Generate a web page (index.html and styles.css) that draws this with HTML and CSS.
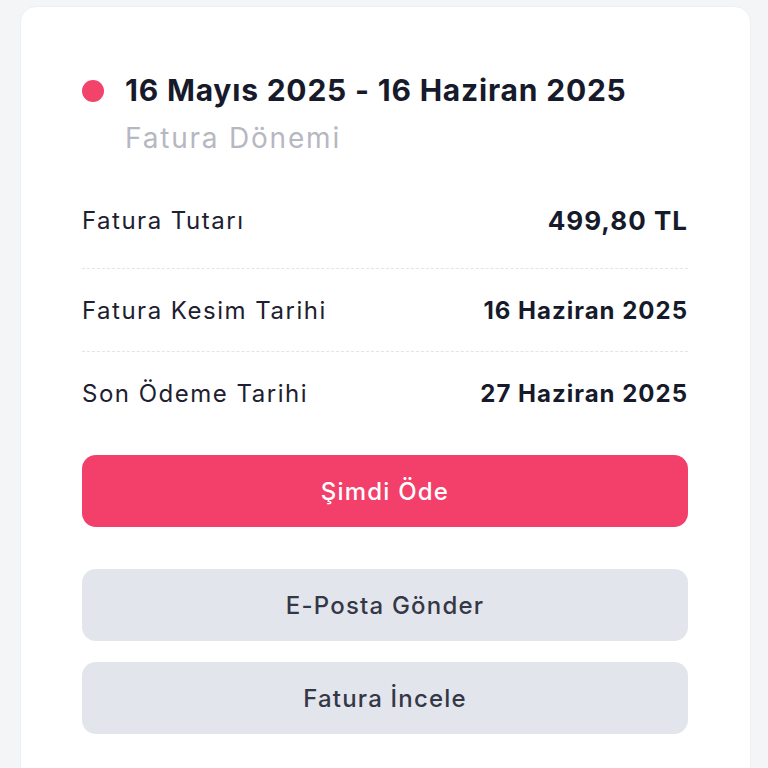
FILE: index.html
```html
<!DOCTYPE html>
<html lang="tr">
<head>
  <meta charset="UTF-8" />
  <meta name="viewport" content="width=device-width, initial-scale=1.0" />
  <title>Fatura Detayı</title>
  <link rel="stylesheet" href="styles.css">
</head>
<body>
  <div class="card">
    <div class="period">
      <span class="dot"></span>
      <div>
        <h2 class="period-title">16 Mayıs 2025 - 16 Haziran 2025</h2>
        <p class="period-label">Fatura Dönemi</p>
      </div>
    </div>

    <div class="info">
      <div class="info-row">
        <span class="info-label">Fatura Tutarı</span>
        <span class="info-value amount">499,80 TL</span>
      </div>
      <div class="info-row">
        <span class="info-label">Fatura Kesim Tarihi</span>
        <span class="info-value">16 Haziran 2025</span>
      </div>
      <div class="info-row">
        <span class="info-label">Son Ödeme Tarihi</span>
        <span class="info-value">27 Haziran 2025</span>
      </div>
    </div>

    <button class="btn btn-pay">Şimdi Öde</button>
    <div class="secondary">
      <button class="btn btn-light">E-Posta Gönder</button>
      <button class="btn btn-light">Fatura İncele</button>
    </div>
  </div>
</body>
</html>
```

FILE: styles.css
```css
body {
  font-family: Inter, 'Noto Sans', Arial, sans-serif;
  margin: 0;
  padding: 0;
  background-color: #f4f5f7;
  overflow: hidden;
}
.card {
  background-color: white;
  margin: 6px 17px 0 20px;
  border: 1px solid #eef0f3;
  border-radius: 16px;
  padding: 65px 62px 40px 61px;
  min-height: 800px;
  box-sizing: border-box;
}
.period {
  display: flex;
  align-items: flex-start;
  gap: 21px;
}
.dot {
  width: 22px;
  height: 22px;
  border-radius: 50%;
  background-color: #f2436b;
  flex-shrink: 0;
  margin-top: 8px;
}
.period-title {
  margin: 0;
  font-size: 30px;
  line-height: 36px;
  font-weight: 700;
  letter-spacing: 0.8px;
  color: #161a2b;
}
.period-label {
  margin: 15px 0 0;
  font-size: 28px;
  line-height: 30px;
  letter-spacing: 1.8px;
  color: #b6b8c1;
}
.info {
  margin-top: 27px;
}
.info-row {
  display: flex;
  justify-content: space-between;
  align-items: center;
  height: 83px;
  border-bottom: 1px dashed #e2e4e8;
  box-sizing: border-box;
}
.info-row:first-child {
  height: 89px;
  padding-bottom: 7px;
}
.info-row:last-child {
  height: 82px;
  border-bottom: none;
}
.info-label {
  font-size: 24px;
  letter-spacing: 1.5px;
  color: #1d2030;
}
.info-value {
  font-size: 24px;
  font-weight: 700;
  letter-spacing: 1px;
  color: #161a2b;
}
.amount {
  font-size: 26px;
}
.btn {
  display: block;
  width: 100%;
  height: 72px;
  border: none;
  border-radius: 14px;
  font-family: inherit;
  font-size: 24px;
  font-weight: 500;
  letter-spacing: 1.2px;
}
.btn-pay {
  margin-top: 21px;
  background-color: #f2406b;
  color: white;
}
.secondary {
  display: flex;
  flex-direction: column;
  gap: 21px;
  margin-top: 42px;
}
.btn-light {
  background-color: #e3e5ed;
  color: #343846;
}
```
